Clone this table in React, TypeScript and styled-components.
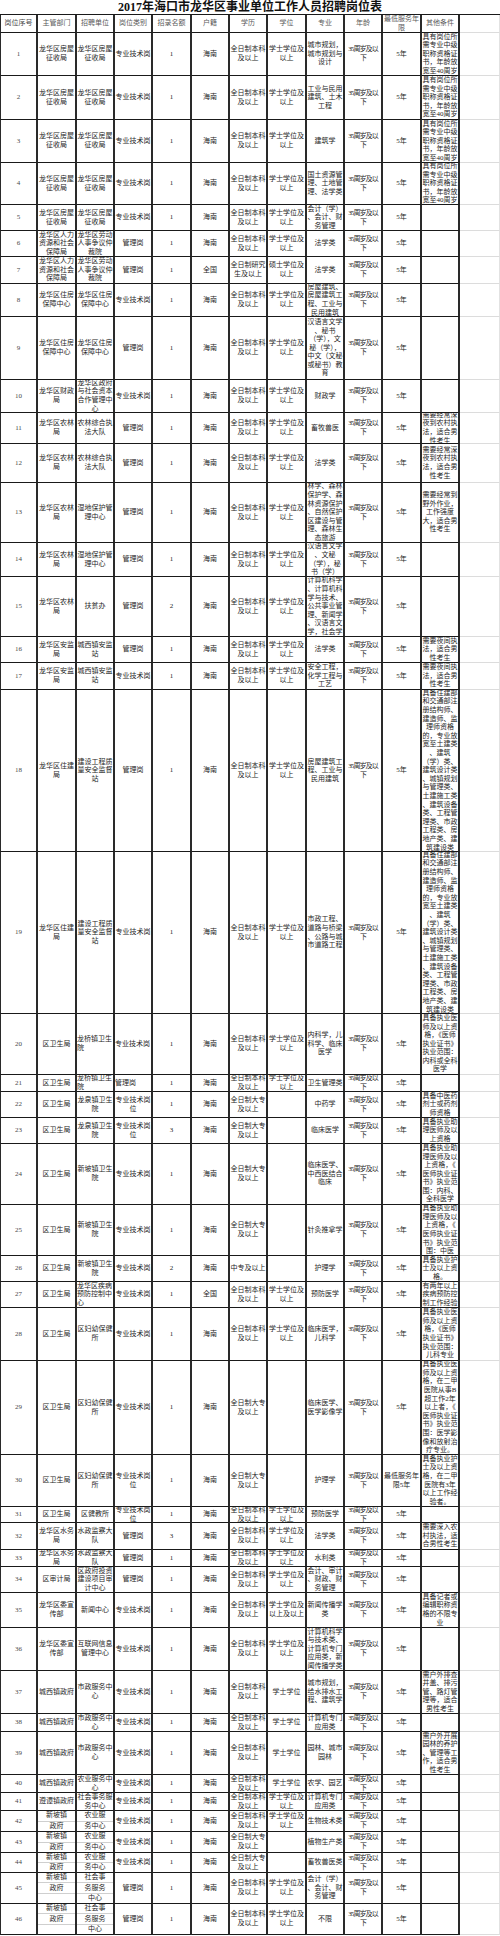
import React from "react";
import styled, { createGlobalStyle } from "styled-components";

const GlobalStyle = createGlobalStyle`
  body {
    margin: 0;
    background: #fff;
    font-family: "Liberation Serif", "Noto Sans CJK SC", serif;
  }
`;

const COLS = "38px 39px 38px 38px 39px 38px 38px 39px 38px 38px 39px 38px 40px";

type CellData = string | string[];
interface RowData {
  h: number;
  c: CellData[];
}

// 자주 나오는 값
const BK = "全日制本科\n及以上";
const DZ = "全日制大专\n及以上";
const XS = "学士学位及\n以上";
const AGE = "35周岁及以\n下";
const Y5 = "5年";
const JS = "专业技术岗";
const GL = "管理岗";
const HN = "海南";
const FJ = "龙华区房屋\n征收局";
const RL = "龙华区人力\n资源和社会\n保障局";
const LD = "龙华区劳动\n人事争议仲\n裁院";
const ZF = "龙华区住房\n保障中心";
const NL = "龙华区农林\n局";
const SD = "湿地保护管\n理中心";
const NC = "需要经常深\n夜到农村执\n法，适合男\n性考生";
const AJ = "龙华区安监\n局";
const YJ = "需要夜间执\n法，适合男\n性考生";
const ZJJ = "龙华区住建\n局";
const ZLJD = "建设工程质\n量安全监督\n站";
const WS = "区卫生局";
const XP = "新坡镇卫生\n院";
const FY = "区妇幼保健\n所";
const SW = "龙华区水务\n局";
const XC = "龙华区委宣\n传部";
const CX = "城西镇政府";
const SZ = "市政服务中\n心";
const ZJ = "具有岗位所\n需专业中级\n职称资格证\n书，年龄放\n宽至40周岁";
const RZ = [
  "具备住建部",
  "和交通部注",
  "册结构师、",
  "建造师、监",
  "理师资格",
  "的，专业放",
  "宽至土建类",
  "、建筑",
  "（学）类、",
  "建筑设计类",
  "、城镇规划",
  "与管理类、",
  "土建施工类",
  "、建筑设备",
  "类、工程管",
  "理类、市政",
  "工程类、房",
  "地产类、建",
  "筑建设类",
].join("\n");
const XPZ = ["新坡镇", "政府"];
const NYF = ["农业服", "务中心"];

const HEAD = [
  "岗位序号",
  "主管部门",
  "招聘单位",
  "岗位类别",
  "招录名额",
  "户籍",
  "学历",
  "学位",
  "专业",
  "年龄",
  "最低服务年\n限",
  "其他条件",
];

// ^ 로 시작하면 왼쪽 정렬
const ROWS: RowData[] = [
  { h: 43, c: ["1", FJ, FJ, JS, "1", HN, BK, XS, "城市规划，\n城市规划与\n设计", AGE, Y5, ZJ] },
  { h: 44, c: ["2", FJ, FJ, JS, "1", HN, BK, XS, "工业与民用\n建筑、土木\n工程", AGE, Y5, ZJ] },
  { h: 43, c: ["3", FJ, FJ, JS, "1", HN, BK, XS, "建筑学", AGE, Y5, ZJ] },
  { h: 42, c: ["4", FJ, FJ, JS, "1", HN, BK, XS, "国土资源管\n理、土地管\n理、法学类", AGE, Y5, ZJ] },
  { h: 26, c: ["5", FJ, FJ, JS, "1", HN, BK, XS, "会计（学）\n、会计、财\n务管理", AGE, Y5, ""] },
  { h: 26, c: ["6", RL, LD, GL, "1", HN, BK, XS, "法学类", AGE, Y5, ""] },
  { h: 27, c: ["7", RL, LD, GL, "1", "全国", "全日制研究\n生及以上", "硕士学位及\n以上", "法学类", AGE, Y5, ""] },
  { h: 33, c: ["8", ZF, ZF, JS, "1", HN, BK, XS, "房屋建筑、\n房屋建筑工\n程、工业与\n民用建筑", AGE, Y5, ""] },
  { h: 63, c: ["9", ZF, ZF, GL, "1", HN, BK, XS, "汉语言文学\n、秘书\n（学），文\n秘（学），\n中文（文秘\n或秘书）教\n育", AGE, Y5, ""] },
  { h: 33, c: ["10", "龙华区财政\n局", "龙华区政府\n与社会资本\n合作管理中\n心", JS, "1", HN, BK, XS, "财政学", AGE, Y5, ""] },
  { h: 31, c: ["11", NL, "农林综合执\n法大队", GL, "1", HN, BK, XS, "畜牧兽医", AGE, Y5, NC] },
  { h: 39, c: ["12", NL, "农林综合执\n法大队", GL, "1", HN, BK, XS, "法学类", AGE, Y5, NC] },
  { h: 60, c: ["13", NL, SD, GL, "1", HN, BK, XS, "林学、森林\n保护学、森\n林资源保护\n、自然保护\n区建设与管\n理、森林生\n态旅游", AGE, Y5, "需要经常到\n野外作业，\n工作强度\n大，适合男\n性考生"] },
  { h: 34, c: ["14", NL, SD, GL, "1", HN, BK, XS, "汉语言文学\n、文秘\n（学），秘\n书（学）", AGE, Y5, ""] },
  { h: 60, c: ["15", NL, "扶贫办", GL, "2", HN, BK, XS, "计算机科学\n、计算机科\n学与技术、\n公共事业管\n理、新闻学\n、汉语言文\n学，社会学", AGE, Y5, ""] },
  { h: 26, c: ["16", AJ, "城西镇安监\n站", GL, "1", HN, BK, XS, "法学类", AGE, Y5, YJ] },
  { h: 27, c: ["17", AJ, "城西镇安监\n站", JS, "1", HN, BK, XS, "安全工程，\n化学工程与\n工艺", AGE, Y5, YJ] },
  { h: 162, c: ["18", ZJJ, ZLJD, GL, "1", HN, BK, XS, "房屋建筑工\n程、工业与\n民用建筑", AGE, Y5, RZ] },
  { h: 162, c: ["19", ZJJ, ZLJD, JS, "1", HN, BK, XS, "市政工程、\n道路与桥梁\n、公路与城\n市道路工程", AGE, Y5, RZ] },
  { h: 61, c: ["20", WS, "^龙桥镇卫生\n院", "^专业技术岗", "1", HN, BK, XS, "内科学，儿\n科学、临床\n医学", AGE, Y5, "具备执业医\n师及以上资\n格，《医师\n执业证书》\n执业范围：\n内科或全科\n医学"] },
  { h: 17, c: ["21", WS, "^龙桥镇卫生\n院", "^管理岗", "1", HN, BK, XS, "卫生管理类", AGE, Y5, ""] },
  { h: 26, c: ["22", WS, "龙泉镇卫生\n院", "专业技术岗\n位", "1", HN, DZ, "", "中药学", AGE, Y5, "具备中医药\n剂士或药剂\n师资格"] },
  { h: 26, c: ["23", WS, "龙泉镇卫生\n院", "专业技术岗\n位", "3", HN, DZ, "", "临床医学", AGE, Y5, "具备执业助\n理医师及以\n上资格"] },
  { h: 61, c: ["24", WS, XP, JS, "1", HN, DZ, "", "临床医学、\n中西医结合\n临床", AGE, Y5, "具备执业助\n理医师及以\n上资格，《\n医师执业证\n书》执业范\n围：内科、\n全科医学"] },
  { h: 51, c: ["25", WS, XP, JS, "1", HN, DZ, "", "针灸推拿学", AGE, Y5, "具备执业助\n理医师及以\n上资格，《\n医师执业证\n书》执业范\n围：中医"] },
  { h: 26, c: ["26", WS, XP, JS, "2", HN, "中专及以上", "", "护理学", AGE, Y5, "具备执业护\n士及以上资\n格。"] },
  { h: 26, c: ["27", WS, "^龙华区疾病\n预防控制中\n心", JS, "1", "全国", BK, XS, "预防医学", AGE, Y5, "有两年以上\n疾病预防控\n制工作经验"] },
  { h: 53, c: ["28", WS, FY, JS, "1", HN, BK, XS, "临床医学，\n儿科学", AGE, Y5, "具备执业医\n师及以上资\n格，《医师\n执业证书》\n执业范围：\n儿科专业"] },
  { h: 94, c: ["29", WS, FY, JS, "1", HN, DZ, "", "临床医学、\n医学影像学", AGE, Y5, "具备执业医\n师及以上资\n格，在二甲\n医院从事B\n超工作2年\n以上者，《\n医师执业证\n书》执业范\n围：医学影\n像和放射治\n疗专业。"] },
  { h: 52, c: ["30", WS, FY, "专业技术岗\n位", "1", HN, DZ, "", "护理学", AGE, "最低服务年\n限5年", "具备执业护\n士及以上资\n格，在二甲\n医院有3年\n以上工作经\n验者。"] },
  { h: 16, c: ["31", WS, "区健教所", "专业技术岗\n位", "1", HN, BK, XS, "预防医学", AGE, Y5, ""] },
  { h: 27, c: ["32", SW, "水政监察大\n队", GL, "3", HN, BK, XS, "法学类", AGE, Y5, "需要深入农\n村执法，适\n合男性考生"] },
  { h: 17, c: ["33", SW, "水政监察大\n队", GL, "1", HN, BK, XS, "水利类", AGE, Y5, ""] },
  { h: 26, c: ["34", "区审计局", "区政府投资\n建设项目审\n计中心", GL, "1", HN, BK, XS, "会计、审计\n、财政、财\n务管理", AGE, Y5, ""] },
  { h: 35, c: ["35", XC, "新闻中心", JS, "1", HN, BK, "学士学位及\n以上及以上", "新闻传播学\n类", AGE, Y5, "具备记者或\n编辑职称资\n格的不限专\n业"] },
  { h: 43, c: ["36", XC, "互联网信息\n管理中心", JS, "1", HN, BK, XS, "计算机科学\n与技术类、\n计算机专门\n应用类，新\n闻传播学类", AGE, Y5, ""] },
  { h: 43, c: ["37", CX, SZ, JS, "1", HN, BK, "学士学位", "城市规划，\n给水排水工\n程、建筑学", AGE, Y5, "需户外排查\n井盖、排污\n管、路灯管\n理等，适合\n男性考生"] },
  { h: 18, c: ["38", CX, SZ, JS, "1", HN, BK, "学士学位", "计算机专门\n应用类", AGE, Y5, ""] },
  { h: 43, c: ["39", CX, SZ, JS, "1", HN, BK, "学士学位", "园林、城市\n园林", AGE, Y5, "需户外开展\n园林的养护\n、管理等工\n作，适合男\n性考生"] },
  { h: 18, c: ["40", CX, "农业服务中\n心", JS, "1", HN, BK, "学士学位", "农学、园艺", AGE, Y5, ""] },
  { h: 18, c: ["41", "遵谭镇政府", "社会事务服\n务中心", JS, "1", HN, BK, XS, "计算机专门\n应用类", AGE, Y5, ""] },
  { h: 21, c: ["42", XPZ, NYF, JS, "1", HN, BK, XS, "生物技术类", AGE, Y5, ""] },
  { h: 21, c: ["43", XPZ, NYF, JS, "1", HN, DZ, "", "植物生产类", AGE, Y5, ""] },
  { h: 20, c: ["44", XPZ, NYF, JS, "1", HN, DZ, "", "畜牧兽医类", AGE, Y5, ""] },
  { h: 31, c: ["45", ["新坡镇", "政府", ""], ["社会事", "务服务", "中心"], GL, "1", HN, BK, XS, "会计（学）\n、会计、财\n务管理", AGE, Y5, ""] },
  { h: 31, c: ["46", ["新坡镇", "政府", ""], ["社会事", "务服务", "中心"], GL, "1", HN, BK, XS, "不限", AGE, Y5, ""] },
];

const App = () => {
  const renderCell = (d: CellData, i: number) => {
    if (Array.isArray(d)) {
      return (
        <SplitCell key={i}>
          {d.map((t, j) => (
            <Part key={j}>{t}</Part>
          ))}
        </SplitCell>
      );
    }
    const left = d.startsWith("^");
    return (
      <Cell key={i} $left={left} $tight={i === 9}>
        {left ? d.slice(1) : d}
      </Cell>
    );
  };

  return (
    <Sheet>
      <GlobalStyle />
      <Title>2017年海口市龙华区事业单位工作人员招聘岗位表</Title>
      <Row $h={18}>
        {HEAD.map((t, i) => (
          <HeadCell key={i}>{t}</HeadCell>
        ))}
        <Spare />
      </Row>
      {ROWS.map((r, idx) => (
        <Row $h={r.h} key={idx}>
          {r.c.map(renderCell)}
          <Spare />
        </Row>
      ))}
    </Sheet>
  );
};

const Sheet = styled.div`
  width: 500px;
  background: #fff;
`;

const Title = styled.div`
  height: 15px;
  box-sizing: border-box;
  border-bottom: 1px solid #1a1a1a;
  display: flex;
  align-items: center;
  justify-content: center;
  font-size: 12px;
  font-weight: 700;
  line-height: 14px;
  color: #111;
`;

const Row = styled.div<{ $h: number }>`
  display: grid;
  grid-template-columns: ${COLS};
  height: ${(p) => p.$h}px;
`;

const Cell = styled.div<{ $left?: boolean; $tight?: boolean }>`
  box-sizing: border-box;
  border-right: 2px solid #2a2a2a;
  border-bottom: 1px solid #1a1a1a;
  display: flex;
  flex-direction: column;
  justify-content: center;
  align-items: ${(p) => (p.$left ? "flex-start" : "center")};
  text-align: ${(p) => (p.$left ? "left" : "center")};
  overflow: hidden;
  white-space: pre;
  font-size: 7px;
  line-height: 8.6px;
  color: #262626;
  letter-spacing: ${(p) => (p.$tight ? "-0.9px" : "0")};

  &:first-child {
    border-left: 1px solid #2a2a2a;
    color: #4a4a4a;
  }
`;

const HeadCell = styled(Cell)`
  color: #5a5a5a;
`;

const SplitCell = styled(Cell)`
  align-items: stretch;
  justify-content: stretch;
`;

const Part = styled.div`
  flex: 1;
  display: flex;
  align-items: center;
  justify-content: center;
  border-bottom: 1px solid #cfcfcf;

  &:last-child {
    border-bottom: none;
  }
`;

const Spare = styled.div`
  box-sizing: border-box;
  border-right: 1px solid #e2e2e2;
  border-bottom: 1px solid #dcdcdc;
`;

export default App;
